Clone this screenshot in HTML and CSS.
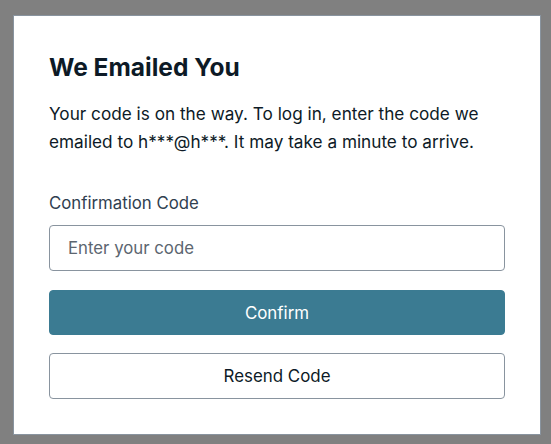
FILE: index.html
```html
<!DOCTYPE html>
<html lang="en">
<head>
<meta charset="utf-8">
<title>We Emailed You</title>
<link rel="stylesheet" href="styles.css">
</head>
<body>
<div class="card">
  <h3 class="title">We Emailed You</h3>
  <p class="desc">Your code is on the way. To log in, enter the code we emailed to h***@h***. It may take a minute to arrive.</p>
  <form class="form">
    <label class="field">
      <span class="label">Confirmation Code</span>
      <input class="input" type="text" placeholder="Enter your code">
    </label>
    <button class="btn btn-primary" type="button">Confirm</button>
    <button class="btn btn-secondary" type="button">Resend Code</button>
  </form>
</div>
</body>
</html>
```
FILE: styles.css
```css
html, body {
  margin: 0;
  padding: 0;
}
body {
  background: #808080;
  font-family: Inter, "Noto Sans", sans-serif;
  color: #0d1a26;
  padding: 15px 0 0 13px;
  height: 444px;
  box-sizing: border-box;
}
.card {
  width: 528px;
  box-sizing: border-box;
  background: #ffffff;
  border: 1px solid #89949f;
  padding: 36px 35px 35px 35px;
  display: flex;
  flex-direction: column;
}
.title {
  margin: 0;
  font-size: 24.5px;
  line-height: 30px;
  font-weight: 700;
  color: #0d1a26;
}
.desc {
  margin: 18px 0 0 0;
  font-size: 17.2px;
  line-height: 28px;
  color: #0d1a26;
}
.form {
  margin-top: 35px;
  display: flex;
  flex-direction: column;
  gap: 19px;
}
.field {
  display: flex;
  flex-direction: column;
  gap: 10px;
}
.label {
  font-size: 16.8px;
  line-height: 24px;
  color: #304050;
}
.input {
  height: 46px;
  box-sizing: border-box;
  border: 1px solid #89949f;
  border-radius: 4px;
  padding: 0 18px;
  font-family: inherit;
  font-size: 16.8px;
  color: #0d1a26;
  outline: none;
}
.input::placeholder {
  color: #5c6670;
}
.btn {
  box-sizing: border-box;
  border-radius: 4px;
  font-family: inherit;
  font-size: 16.9px;
  cursor: pointer;
}
.btn-primary {
  height: 45px;
  background: #3b7b92;
  border: 1px solid #3b7b92;
  color: #ffffff;
}
.btn-secondary {
  height: 46px;
  background: #ffffff;
  border: 1px solid #89949f;
  color: #0d1a26;
  margin-top: -1px;
}
```
